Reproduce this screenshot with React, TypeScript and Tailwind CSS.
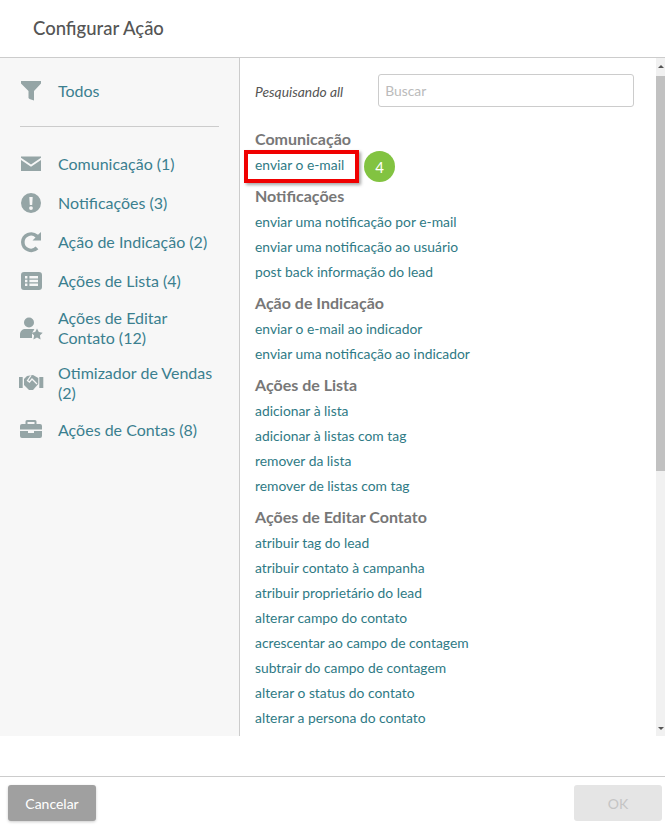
import type { ReactNode } from "react";

function Icon({ children }: { children: ReactNode }) {
  return (
    <svg viewBox="0 0 24 24" className="w-[24px] h-[24px] shrink-0 text-[#95a5a6] overflow-visible" fill="currentColor">
      {children}
    </svg>
  );
}

const FilterIcon = () => (
  <Icon>
    <path d="M1 2h20v2.5L14 12v9.5L9.5 20l-1-1v-7L1 4.5z" />
  </Icon>
);
const MailIcon = () => (
  <Icon>
    <path d="M1 4.500h20v1.200L11 12.500 1 5.700z" />
    <path d="M1 8l10 6.800L21 8v11H1z" />
  </Icon>
);
const AlertIcon = () => (
  <Icon>
    <path
      fillRule="evenodd"
      d="M11 2a10 10 0 1 1 0 20 10 10 0 0 1 0-20zM9.300 6l.5 8h2.400l.5-8zM11 15.200a1.900 1.900 0 1 0 0 3.800 1.900 1.900 0 0 0 0-3.800z"
    />
  </Icon>
);
const RedoIcon = () => (
  <Icon>
    <path d="M21 2v8.500h-8.500l3-3A6.400 6.400 0 0 0 4.600 12a6.400 6.400 0 0 0 11 4.600l2.800 2.600A10.300 10.300 0 0 1 1 12 10.300 10.300 0 0 1 18 4.800z" />
  </Icon>
);
const ListIcon = () => (
  <Icon>
    <path
      fillRule="evenodd"
      d="M4 3h15a3 3 0 0 1 3 3v12a3 3 0 0 1-3 3H4a3 3 0 0 1-3-3V6a3 3 0 0 1 3-3zM5 7v2.400h2.400V7zm4.400 0v2.400H18V7zM5 10.800v2.400h2.400v-2.400zm4.400 0v2.400H18v-2.400zM5 14.600V17h2.400v-2.400zm4.400 0V17H18v-2.400z"
    />
  </Icon>
);
const UserStarIcon = () => (
  <Icon>
    <circle cx="9" cy="6.500" r="5" />
    <path d="M0 22v-3.500C0 15 2.500 13 5.500 13h7c.7 0 1.300.1 1.900.3L12 17v5z" />
    <path d="M17 12.500l1.800 3.600 3.900.6-2.800 2.800.7 4-3.600-1.900-3.600 1.900.7-4-2.800-2.800 3.900-.6z" />
  </Icon>
);
const HandshakeIcon = () => (
  <Icon>
    <path d="M-1 6h3.700v11H-1zM19.300 6h4v11h-4z" />
    <path d="M7 5l6-1 5.300 3v6L13 19H9l-5-5V8z" />
    <path d="M11 4.500L7.500 9.500l2 1.500L12 8l5 5" fill="none" stroke="#f7f7f7" strokeWidth="1.300" />
  </Icon>
);
const BriefcaseIcon = () => (
  <Icon>
    <path
      fillRule="evenodd"
      d="M7 2h8a1.500 1.500 0 0 1 1.500 1.500V6H20a2 2 0 0 1 2 2v3.500H0V8a2 2 0 0 1 2-2h3.500V3.500A1.500 1.500 0 0 1 7 2zm.5 2v2h7V4z"
    />
    <path d="M0 13h8v2h6v-2h8v5a2 2 0 0 1-2 2H2a2 2 0 0 1-2-2z" />
  </Icon>
);

const categories = [
  { icon: <MailIcon />, label: "Comunicação (1)" },
  { icon: <AlertIcon />, label: "Notificações (3)" },
  { icon: <RedoIcon />, label: "Ação de Indicação (2)" },
  { icon: <ListIcon />, label: "Ações de Lista (4)" },
  { icon: <UserStarIcon />, label: "Ações de Editar Contato (12)" },
  { icon: <HandshakeIcon />, label: "Otimizador de Vendas (2)" },
  { icon: <BriefcaseIcon />, label: "Ações de Contas (8)" },
];

const groups = [
  { title: "Notificações", items: ["enviar uma notificação por e-mail", "enviar uma notificação ao usuário", "post back informação do lead"] },
  { title: "Ação de Indicação", items: ["enviar o e-mail ao indicador", "enviar uma notificação ao indicador"] },
  { title: "Ações de Lista", items: ["adicionar à lista", "adicionar à listas com tag", "remover da lista", "remover de listas com tag"] },
  {
    title: "Ações de Editar Contato",
    items: [
      "atribuir tag do lead",
      "atribuir contato à campanha",
      "atribuir proprietário do lead",
      "alterar campo do contato",
      "acrescentar ao campo de contagem",
      "subtrair do campo de contagem",
      "alterar o status do contato",
      "alterar a persona do contato",
    ],
  },
];

export default function App() {
  return (
    <div className="w-[665px] h-[825px] bg-white flex flex-col overflow-hidden font-['Lato',sans-serif]">
      <header className="h-[58px] shrink-0 border-b border-[#ccc] pl-[33px] pt-[16px]">
        <h1 className="text-[18.5px] leading-[24px] font-medium text-[#555]">Configurar Ação</h1>
      </header>

      <div className="h-[678px] shrink-0 flex">
        <aside className="w-[240px] shrink-0 bg-[#f7f7f7] border-r border-[#ccc] pl-[20px] pr-[20px] pt-[21px]">
          <div className="flex items-center gap-[14px] h-[24px] text-[16px] leading-[20px] text-[#3b7f8f]">
            <FilterIcon />
            <span>Todos</span>
          </div>
          <div className="h-px bg-[#ccc] mt-[23px] mb-[25px]" />
          <ul className="flex flex-col gap-[15px]">
            {categories.map((c) => (
              <li key={c.label} className="flex items-center gap-[14px] text-[16px] leading-[20px] text-[#3b7f8f]">
                {c.icon}
                <span>{c.label}</span>
              </li>
            ))}
          </ul>
        </aside>

        <main className="flex-1 pl-[15px] pt-[16px] overflow-hidden">
          <div className="flex items-center w-[379px] gap-[35px]">
            <span className="text-[13.85px] pt-[3px] italic text-[#555] whitespace-nowrap">Pesquisando all</span>
            <input
              placeholder="Buscar"
              className="w-[256px] h-[33px] rounded-[3px] border border-[#ccc] px-[6px] text-[13.85px] placeholder:text-[#bbb] bg-white"
            />
          </div>

          <h2 className="mt-[22px] mb-[4px] text-[16px] leading-[20px] font-bold text-[#777]">Comunicação</h2>
          <div className="relative h-[25px] flex items-center text-[13.85px] text-[#2f7a85]">
            <span>enviar o e-mail</span>
            <span className="absolute left-[-11px] top-[-3px] w-[115px] h-[33px] border-[4px] border-[#f00000] shadow-[2px_2px_3px_rgba(0,0,0,0.35)]" />
            <span className="absolute left-[109px] top-[-2px] w-[31px] h-[31px] pt-[2px] rounded-full bg-[#82c341] text-white text-[15px] flex items-center justify-center">
              4
            </span>
          </div>

          {groups.map((g) => (
            <section key={g.title} className="mt-[8px]">
              <h2 className="text-[16px] leading-[20px] font-bold text-[#777] mb-[4px]">{g.title}</h2>
              <ul>
                {g.items.map((item) => (
                  <li key={item} className="h-[25px] flex items-center text-[13.85px] text-[#2f7a85] whitespace-nowrap">
                    {item}
                  </li>
                ))}
              </ul>
            </section>
          ))}
        </main>

        <div className="w-[9px] shrink-0 bg-[#f1f1f1] flex flex-col items-center">
          <svg viewBox="0 0 8 8" className="w-[8px] h-[18px] shrink-0 text-[#555]" fill="currentColor">
            <path d="M1 5l3-3 3 3z" />
          </svg>
          <div className="w-full h-[395px] bg-[#c1c1c1]" />
          <div className="flex-1" />
          <svg viewBox="0 0 8 8" className="w-[8px] h-[16px] shrink-0 text-[#555]" fill="currentColor">
            <path d="M1 3l3 3 3-3z" />
          </svg>
        </div>
      </div>

      <footer className="mt-[40px] border-t border-[#ccc] h-[49px] flex items-start justify-between pl-[8px] pr-[3px] pt-[8px]">
        <button className="w-[88px] h-[36px] rounded-[3px] bg-[#a0a0a0] text-white text-[14px] shadow-[0_1px_3px_rgba(0,0,0,0.2)]">
          Cancelar
        </button>
        <button className="w-[88px] h-[36px] rounded-[3px] bg-[#e5e5e5] text-[#c4c4c4] text-[14px]">OK</button>
      </footer>
    </div>
  );
}
